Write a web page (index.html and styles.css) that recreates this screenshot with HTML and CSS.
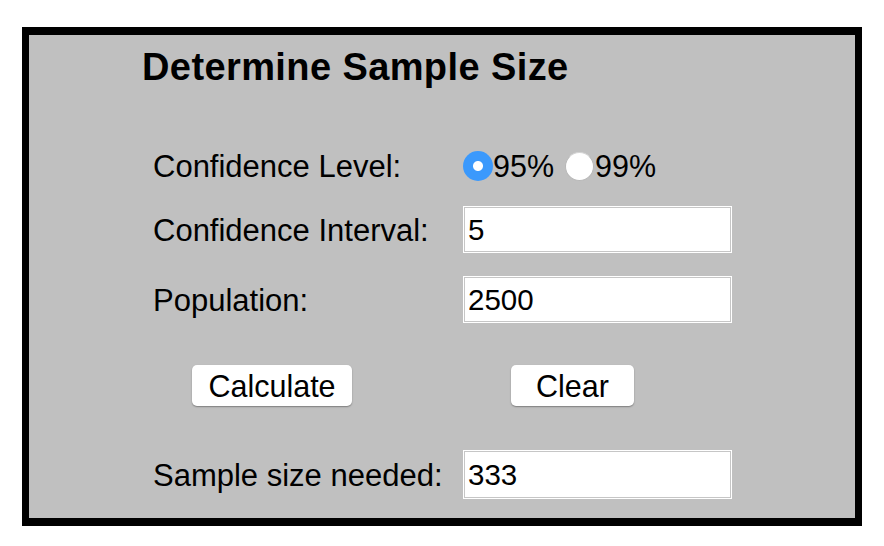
FILE: index.html
```html
<!DOCTYPE html>
<html>
<head>
<meta charset="utf-8">
<link rel="stylesheet" href="styles.css">
</head>
<body>
<div class="page">
  <div class="box">
    <h1 class="title">Determine Sample Size</h1>
    <div class="form">
      <div class="row row-level">
        <span class="label">Confidence Level:</span>
        <span class="radios">
          <input type="radio" name="lvl" class="radio" checked><span class="rtext">95%</span><input type="radio" name="lvl" class="radio radio-second"><span class="rtext">99%</span>
        </span>
      </div>
      <div class="row row-interval">
        <span class="label">Confidence Interval:</span>
        <input type="text" class="field" value="5">
      </div>
      <div class="row row-pop">
        <span class="label">Population:</span>
        <input type="text" class="field" value="2500">
      </div>
      <div class="row row-buttons">
        <span class="btn-cell"><button class="btn btn-calc">Calculate</button></span>
        <span class="btn-cell"><button class="btn btn-clear">Clear</button></span>
      </div>
      <div class="row row-result">
        <span class="label">Sample size needed:</span>
        <input type="text" class="field field-result" value="333">
      </div>
    </div>
  </div>
</div>
</body>
</html>
```

FILE: styles.css
```css
html, body {
  margin: 0;
  padding: 0;
  background: #ffffff;
}

.page {
  padding: 27px 0 0 22px;
}

.box {
  box-sizing: border-box;
  width: 840px;
  height: 499px;
  border-style: solid;
  border-color: #000;
  border-width: 8px 7px 8px 7px;
  background: #c0c0c0;
  padding-left: 113px;
  font-family: "Liberation Sans", Arial, Helvetica, sans-serif;
  color: #000;
}

.title {
  margin: 12px 0 0 0;
  font-size: 38px;
  line-height: 40px;
  font-weight: bold;
  letter-spacing: 0.4px;
}

.form {
  margin-left: 11px;
  display: flex;
  flex-direction: column;
}

.row {
  display: flex;
  align-items: center;
  height: 48px;
}

.row-level { margin-top: 54px; }
.row-interval { margin-top: 16px; }
.row-pop { margin-top: 22px; }
.row-buttons { margin-top: 38px; }
.row-result { margin-top: 41px; }

.label {
  width: 310px;
  flex: none;
  font-size: 31px;
  line-height: 48px;
  padding-top: 4px;
  white-space: nowrap;
}

.radios {
  display: flex;
  align-items: center;
  font-size: 30.5px;
  line-height: 48px;
  padding-top: 2px;
  white-space: nowrap;
}

.radio {
  -webkit-appearance: none;
  appearance: none;
  margin: 0;
  width: 30px;
  height: 30px;
  border-radius: 50%;
  box-sizing: border-box;
  background: #fff;
  border: 1px solid #b8b8b8;
  border-top-color: #d4d4d4;
}

.radio:checked {
  border: none;
  background: radial-gradient(circle, #ffffff 0 4.5px, #3b99fc 5.5px);
}

.radio-second {
  margin-left: 11px;
  margin-right: 1px;
  width: 29px;
  height: 29px;
}

.rtext {
  display: inline-block;
}

.field {
  box-sizing: border-box;
  width: 267px;
  height: 45px;
  margin: 0 0 0 1px;
  padding: 2px 0 0 3px;
  border: 1px solid #c6c6c6;
  box-shadow: 0 0 0 1px #ffffff;
  background: #fff;
  font-family: "Liberation Sans", Arial, Helvetica, sans-serif;
  font-size: 29.5px;
  color: #000;
  outline: none;
}

.field-result {
  height: 47px;
}

.btn-cell {
  display: flex;
  align-items: center;
}

.btn {
  box-sizing: border-box;
  height: 41px;
  padding: 2px 0 0 0;
  border: none;
  border-radius: 5px;
  background: #fff;
  box-shadow: 0 1px 1.5px rgba(0, 0, 0, 0.35);
  font-family: "Liberation Sans", Arial, Helvetica, sans-serif;
  font-size: 30.5px;
  color: #000;
  text-align: center;
}

.btn-calc {
  width: 160px;
  margin-left: 39px;
}

.btn-clear {
  width: 123px;
  margin-left: 159px;
}
```
